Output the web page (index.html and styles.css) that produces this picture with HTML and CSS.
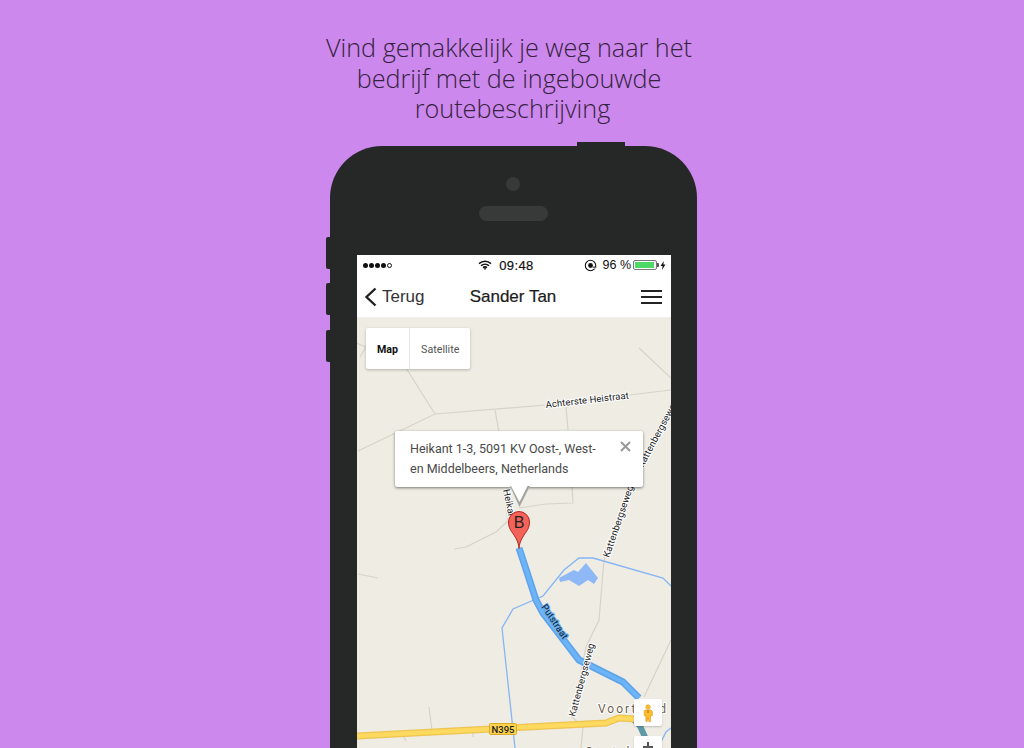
FILE: index.html
```html
<!DOCTYPE html>
<html lang="nl">
<head>
<meta charset="utf-8">
<title>Routebeschrijving</title>
<link rel="stylesheet" href="styles.css">
</head>
<body>
<main class="page">
  <h1 class="headline">Vind gemakkelijk je weg naar het<br>bedrijf met de ingebouwde<br><span class="last-line">routebeschrijving</span></h1>
  <div class="phone">
    <span class="hw hw-top"></span>
    <span class="hw hw-side hw-1"></span>
    <span class="hw hw-side hw-2"></span>
    <span class="hw hw-side hw-3"></span>
    <div class="bezel-top">
      <span class="camera"></span>
      <span class="speaker"></span>
    </div>
    <div class="screen">
      <div class="status">
        <div class="signal"><i></i><i></i><i></i><i></i><i class="off"></i></div>
        <div class="status-center">
          <svg class="wifi" width="14" height="10" viewBox="0 0 14 10"><path d="M1 3.600C4.400.4 9.600.4 13 3.600M3 5.700c2.300-2.100 5.700-2.100 8 0M5 7.700c1.200-1 2.800-1 4 0" fill="none" stroke="#111" stroke-width="1.500"/><path d="M7 10 5.700 8.600c.8-.5 1.800-.5 2.600 0z" fill="#111"/></svg>
          <span>09:48</span>
        </div>
        <div class="status-right">
          <svg width="13" height="13" viewBox="0 0 12 12"><circle cx="6" cy="6" r="4.800" fill="none" stroke="#111" stroke-width="1"/><circle cx="6" cy="6" r="2.200" fill="#111"/><path d="M8.800 8h3" stroke="#fff" stroke-width="1.600"/><path d="M8 7.500h3.500" stroke="#111" stroke-width=".9"/></svg>
          <span class="pct">96 %</span>
          <span class="battery"><span class="charge"></span></span>
          <svg width="6" height="9" viewBox="0 0 6 9"><path d="M3.800 0 .6 5h2L2 9l3.400-5.400h-2z" fill="#111"/></svg>
        </div>
      </div>
      <nav class="navbar">
        <div class="back">
          <svg width="14" height="20" viewBox="0 0 14 20"><path d="M11.500 1.500 2.500 10l9 8.500" fill="none" stroke="#222" stroke-width="2.400"/></svg>
          <span>Terug</span>
        </div>
        <div class="title">Sander Tan</div>
        <div class="burger"><i></i><i></i><i></i></div>
      </nav>
      <div class="map">
        <svg class="map-art" viewBox="357 318 314 430" width="314" height="430">
          <g class="road">
            <path d="M356 343l10 4M360 357l6-10M406 368l29 46M358 451l77-37 111-9 125-15"/>
            <path d="M495 410l4 22M566 407l2 23M572 487l1 16-27 1-27 4"/>
            <path d="M454 549l12-2 30-15 13-12M503 490l5 30"/>
            <path d="M671 403l-43 84-24 73-5 60-13 27-14 70 11 10-2 21"/>
            <path d="M639 348l32 30M358 574l20 4M429 707l1 8 2 15M403 735l3 6M473 733v4M671 640l-27 57"/>
          </g>
          <path class="water-line" d="M515 748 502 628l11-19 30-13 21-26 15-12h14l70 20 8 8M671 728l-5 4-5 10"/>
          <path class="lake" d="M559 578l15-8 4 2 8-9 12 15-4 6-6-4-9 6-10-6-9 2z"/>
          <path class="teal" d="M634 720l6 6 10 22"/>
          <g class="highway">
            <path class="hw-edge" d="M356 736 606 723l13-5 16 1"/>
            <path class="hw-fill" d="M356 736 606 723l13-5 16 1"/>
          </g>
          <path class="route-edge" d="M519 548l4 12 13 40 7 13 36 47 44 22 16 16"/>
          <path class="route" d="M519 548l4 12 13 40 7 13 36 47 44 22 16 16"/>
          <g class="labels">
            <text class="road-label" transform="translate(546 408) rotate(-6.500)">Achterste Heistraat</text>
            <text class="road-label" transform="translate(609 558) rotate(-71)">Kattenbergseweg</text>
            <text class="road-label" transform="translate(643 468) rotate(-62)">Kattenbergseweg</text>
            <text class="road-label" transform="translate(503 490) rotate(78)">Heikant</text>
            <text class="road-label route-label" transform="translate(541 607) rotate(56)">Putstraat</text>
            <text class="road-label" transform="translate(575 717) rotate(-75)">Kattenbergseweg</text>
            <text class="place" x="598" y="713">Voorteind</text>
            <text class="place" x="585" y="756">Oostel</text>
          </g>
          <g class="shield">
            <rect x="489.500" y="723.500" width="27" height="11" rx="1"/>
            <text x="503" y="732.500">N395</text>
          </g>
        </svg>
        <div class="map-type">
          <span class="type active">Map</span>
          <span class="type">Satellite</span>
        </div>
        <div class="info">
          <span class="info-text">Heikant 1-3, 5091 KV Oost-, West-<br>en Middelbeers, Netherlands</span>
          <svg class="info-close" width="11" height="11" viewBox="0 0 11 11"><path d="M1 1l9 9M10 1l-9 9" stroke="#999" stroke-width="2"/></svg>
          <svg class="info-tail" width="20" height="22" viewBox="0 0 20 22"><path d="M0 0h20L9.500 21z" fill="#fff"/><path d="M0 0l9.500 21L20 0h-2.500L9.500 16 1 0z" fill="#86867f" opacity=".75"/></svg>
        </div>
        <svg class="pin" width="24" height="40" viewBox="0 0 24 40"><path d="M12 38.500C11.500 31 8 26.500 4.500 21.500 2.800 19 1.500 16 1.500 12a10.500 10.500 0 0 1 21 0c0 4-1.300 7-3 9.500C16 26.500 12.500 31 12 38.500z" fill="#f4635a" stroke="#b3261e" stroke-width="1"/><text x="12" y="17.500">B</text></svg>
        <div class="ctl pegman">
          <svg width="12" height="20" viewBox="0 0 14 20"><circle cx="7" cy="3" r="2.700" fill="#f9c02c" stroke="#d58a0a" stroke-width=".5"/><path d="M3.500 6.500h7l1.500 1.500v5l-2 .5V20H8l-1-5-1 5H4.500v-6.500l-2-.5V8z" fill="#f9c02c" stroke="#d58a0a" stroke-width=".6"/><path d="M6.500 6.500h1L7.500 10h-1z" fill="#d1462e"/></svg>
        </div>
        <div class="ctl zoom-in"><i></i></div>
      </div>
    </div>
  </div>
</main>
</body>
</html>
```
FILE: styles.css
```css
* { box-sizing: border-box; }
html, body { margin: 0; height: 100%; }
body { background: #cc88ec; overflow: hidden; font-family: "Liberation Sans", Arial, sans-serif; }
.page { width: 1024px; height: 748px; overflow: hidden; display: flex; flex-direction: column; align-items: center; }
.headline {
  flex: none;
  margin: 32px 6px 0 0;
  font: 300 25.200px/30.500px "Open Sans", sans-serif;
  color: #35223f;
  text-align: center;
  height: 114px;
}
.last-line { padding-left: 7px; }
.phone {
  position: relative;
  flex: none;
  width: 367px;
  height: 800px;
  margin-left: 3px;
  background: #262827;
  border-radius: 52px 52px 0 0;
  padding: 0 26px 0 27px;
}
.hw { position: absolute; background: #262827; }
.hw-top { left: 247px; top: -4px; width: 48px; height: 4px; }
.hw-side { left: -4px; width: 4px; height: 32px; border-radius: 2px 0 0 2px; }
.hw-1 { top: 91px; }
.hw-2 { top: 137px; }
.hw-3 { top: 184px; }
.bezel-top { height: 109px; display: flex; flex-direction: column; align-items: center; padding: 31px 2px 0 0; }
.camera { width: 14px; height: 14px; border-radius: 50%; background: #383a39; }
.speaker { width: 69px; height: 15px; border-radius: 8px; background: #383a39; margin-top: 15px; }
.screen { background: #fff; height: 493px; overflow: hidden; display: flex; flex-direction: column; }
.status { height: 20px; flex: none; display: grid; grid-template-columns: 1fr auto 1fr; align-items: center; padding: 0 5px 0 6px; font-size: 13px; color: #111; }
.signal { display: flex; gap: 1px; }
.signal i { width: 5px; height: 5px; border-radius: 50%; background: #111; }
.signal i.off { background: #fff; border: 1px solid #111; }
.status-center { display: flex; align-items: center; gap: 7px; letter-spacing: .4px; margin-right: 17px; }
.status-center span { -webkit-text-stroke: .2px #111; }
.status-right { display: flex; align-items: center; justify-content: flex-end; gap: 2px; }
.pct { margin: 0 0 0 4px; font-size: 12.500px; }
.battery { position: relative; width: 24px; height: 10px; border: 1px solid #777; border-radius: 2px; padding: 1px; margin-right: 1px; }
.battery::after { content: ""; position: absolute; right: -3px; top: 2px; width: 2px; height: 4px; background: #555; border-radius: 0 1px 1px 0; }
.charge { display: block; width: 96%; height: 100%; background: #4cd964; }
.navbar { height: 43px; display: grid; grid-template-columns: 1fr auto 1fr; align-items: center; padding: 2px 9px 0 7px; border-bottom: 1px solid #eee; flex: none; }
.back { display: flex; align-items: center; gap: 4px; font-size: 17px; color: #333; }
.title { font-size: 17px; color: #1b1b1b; -webkit-text-stroke: .2px #1b1b1b; }
.burger { width: 21px; display: flex; flex-direction: column; gap: 4px; justify-self: end; }
.burger i { height: 2px; background: #222; display: block; }
.map { position: relative; flex: 1; background: #efece4; overflow: hidden; }
.map-art { position: absolute; left: 0; top: 0; }
.road { fill: none; stroke: #d7d3ca; stroke-width: 1.200; }
.water-line { fill: none; stroke: #85b5f5; stroke-width: 1.300; }
.lake { fill: #8fb8f7; }
.teal { fill: none; stroke: #5d9aa6; stroke-width: 6; }
.hw-edge { fill: none; stroke: #eec452; stroke-width: 7; }
.hw-fill { fill: none; stroke: #fdd95f; stroke-width: 4.500; }
.route-edge { fill: none; stroke: #5ca3ea; stroke-width: 7; stroke-linejoin: round; }
.route { fill: none; stroke: #6cb4f7; stroke-width: 4; stroke-linejoin: round; }
.road-label { font: 400 9.500px "Roboto", sans-serif; fill: #222; stroke: #fff; stroke-width: 2px; paint-order: stroke; letter-spacing: .1px; }
.route-label { fill: #123; stroke: #69aef0; }
.place { font: 400 12px "Roboto", sans-serif; fill: #6e5f4d; letter-spacing: 2px; stroke: #fff; stroke-width: 2px; paint-order: stroke; }
.shield rect { fill: #fdd24d; stroke: #d8a92c; }
.shield text { font: 500 9.500px "Roboto", sans-serif; fill: #222; text-anchor: middle; }
.map-type { position: absolute; left: 9px; top: 10px; height: 41px; display: flex; background: #fff; border-radius: 2px; box-shadow: 0 1px 3px rgba(0,0,0,.25); font: 400 10.700px/43px "Roboto", sans-serif; color: #555; }
.type { padding: 0 11px; }
.type.active { color: #111; font-weight: 700; border-right: 1px solid #e6e6e6; }
.info { position: absolute; left: 38px; top: 113px; width: 248px; height: 56px; background: #fff; border-radius: 2px; box-shadow: 0 1px 3px rgba(0,0,0,.5); padding: 8px 15px; font: 400 12.500px/19.500px "Roboto", sans-serif; color: #4a4a4a; }
.info-text { display: block; white-space: nowrap; }
.info-close { position: absolute; right: 12px; top: 10px; }
.info-tail { position: absolute; left: 115px; top: 55px; }
.pin { position: absolute; left: 150px; top: 192px; }
.pin text { font: 400 16px "Liberation Sans", sans-serif; fill: #222; text-anchor: middle; }
.ctl { position: absolute; left: 277px; width: 28px; background: #fff; border-radius: 2px; box-shadow: 0 1px 2px rgba(0,0,0,.2); display: flex; justify-content: center; }
.pegman { top: 381px; height: 27px; align-items: center; }
.zoom-in { top: 418px; height: 30px; }
.zoom-in i { position: relative; display: block; width: 10px; height: 2px; background: #555; margin-top: 10px; }
.zoom-in i::after { content: ""; position: absolute; left: 4px; top: -4px; width: 2px; height: 10px; background: #555; }
```
